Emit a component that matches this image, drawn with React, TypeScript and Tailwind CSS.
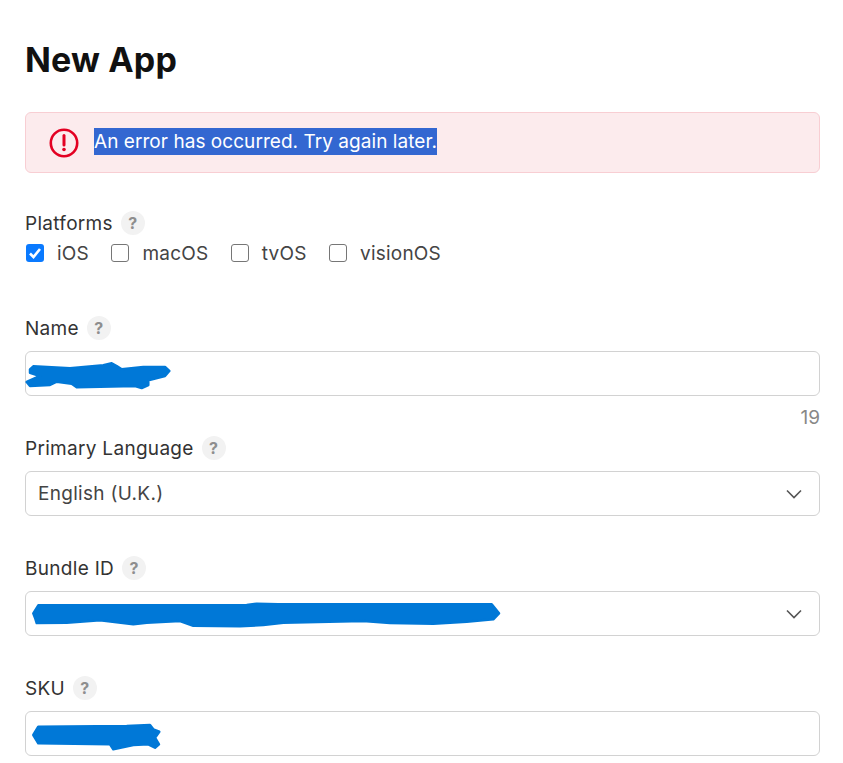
import React from "react";

function Help() {
  return (
    <span className="ml-2 flex h-6 w-6 items-center justify-center rounded-full bg-[#f2f2f2] text-[16px] font-bold text-[#8e8e8e]">?</span>
  );
}

function Label({ children }: { children: React.ReactNode }) {
  return (
    <div className="flex h-6 items-center text-[19px] leading-6 tracking-[0.3px] text-[#333333]">
      <span className="pt-[2px]">{children}</span>
      <Help />
    </div>
  );
}

function Check({ label, checked }: { label: string; checked?: boolean }) {
  return (
    <div className="mr-[22.5px] flex items-center">
      {checked ? (
        <span className="flex h-[18px] w-[18px] items-center justify-center rounded-[3px] bg-[#0a7aff]">
          <svg width="16" height="16" viewBox="0 0 16 16" fill="none">
            <path d="M3 8.5 L6.5 12 L13 4" stroke="#fff" strokeWidth="2.6" />
          </svg>
        </span>
      ) : (
        <span className="h-[18px] w-[18px] rounded-[3px] border border-[#767676] bg-white" />
      )}
      <span className="ml-[13px] pt-[2px] text-[19px] tracking-[0.2px] text-[#444444]">{label}</span>
    </div>
  );
}

function Scribble({ points }: { points: string }) {
  return (
    <svg className="absolute -left-px top-0" width="500" height="45" viewBox="0 0 500 45">
      <polygon points={points} fill="#0078d7" stroke="#0078d7" strokeWidth="2.5" strokeLinejoin="round" />
    </svg>
  );
}

function Chevron() {
  return (
    <svg className="absolute right-[16px] top-[16px]" width="18" height="12" viewBox="0 0 18 12" fill="none">
      <path d="M2 2.5 L9 9.5 L16 2.5" stroke="#555555" strokeWidth="1.6" />
    </svg>
  );
}

function Box({ children }: { children?: React.ReactNode }) {
  return (
    <div className="relative mt-[11px] flex h-[45px] items-center rounded-[6px] border border-[#d2d2d2] bg-white px-3 text-[19px] tracking-[0.3px] text-[#444444]">
      {children}
    </div>
  );
}

export default function App() {
  return (
    <div className="min-h-[763px] w-[843px] overflow-hidden bg-white pl-[25px] pr-[23px] pt-[37px] font-['Inter','Liberation_Sans',sans-serif]">
      <h1 className="h-[46px] text-[34px] font-bold leading-[46px] tracking-[0.15px] text-[#111111]">New App</h1>

      <div className="mt-[29px] flex h-[61px] items-center rounded-[6px] border border-[#f8ced3] bg-[#fcebed] pl-[23px]">
        <svg width="30" height="30" viewBox="0 0 30 30" fill="none" className="mt-[1px]">
          <circle cx="15" cy="15" r="13.2" stroke="#e30022" strokeWidth="2.6" />
          <path d="M15 7.5 V17" stroke="#e30022" strokeWidth="3" strokeLinecap="round" />
          <circle cx="15" cy="21.5" r="1.8" fill="#e30022" />
        </svg>
        <span className="mb-[2px] ml-[15px] bg-[#3367d1] text-[19px] leading-[27px] tracking-[0.05px] text-white">An error has occurred. Try again later.</span>
      </div>

      <div className="mt-[38px]">
        <Label>Platforms</Label>
        <div className="ml-[1px] mt-[6px] flex h-6 items-center">
          <Check label="iOS" checked />
          <Check label="macOS" />
          <Check label="tvOS" />
          <Check label="visionOS" />
        </div>
      </div>

      <div className="mt-[51px]">
        <Label>Name</Label>
        <Box>
          <Scribble points="5,17.3 8.3,14.3 45,16.3 78.3,13.3 86.7,11.3 91.7,14 96.7,17.3 118.3,15 140,15 144.3,19 140,24 123.3,28.3 123.3,33 116.7,36 110,34 51.7,35.3 46.7,31.7 31.7,29.7 25,33 5,34 1.7,30 15,24 5,20.7" />
        </Box>
        <div className="h-10 pt-[10px] text-right text-[19px] leading-6 text-[#888888]">19</div>
      </div>

      <div className="pb-10">
        <Label>Primary Language</Label>
        <Box>
          <span className="pt-[2px]">English (U.K.)</span>
          <Chevron />
        </Box>
      </div>

      <div className="pb-10">
        <Label>Bundle ID</Label>
        <Box>
          <Scribble points="8.3,21.3 13.3,13.3 221.7,13 231.7,11.7 253.3,12.3 466.7,12.3 474,21.3 468.3,27.3 441.7,29.7 408.3,31.7 365,31 338.3,29 258.3,30.7 238.3,33 215,34.3 168.3,33.7 155,29 121.7,30.7 108.3,32.3 75,28.3 41.7,30.7 11.7,31 10,25.7" />
          <Chevron />
        </Box>
      </div>

      <div>
        <Label>SKU</Label>
        <Box>
          <Scribble points="8.3,23 13.3,14.7 101.7,14 125,13 128.3,17.3 134.3,19.7 130,25.7 134,32.3 130,35.7 123.3,32.3 108.3,33 88.3,37.3 85,32.3 13.3,31.3" />
        </Box>
      </div>
    </div>
  );
}
